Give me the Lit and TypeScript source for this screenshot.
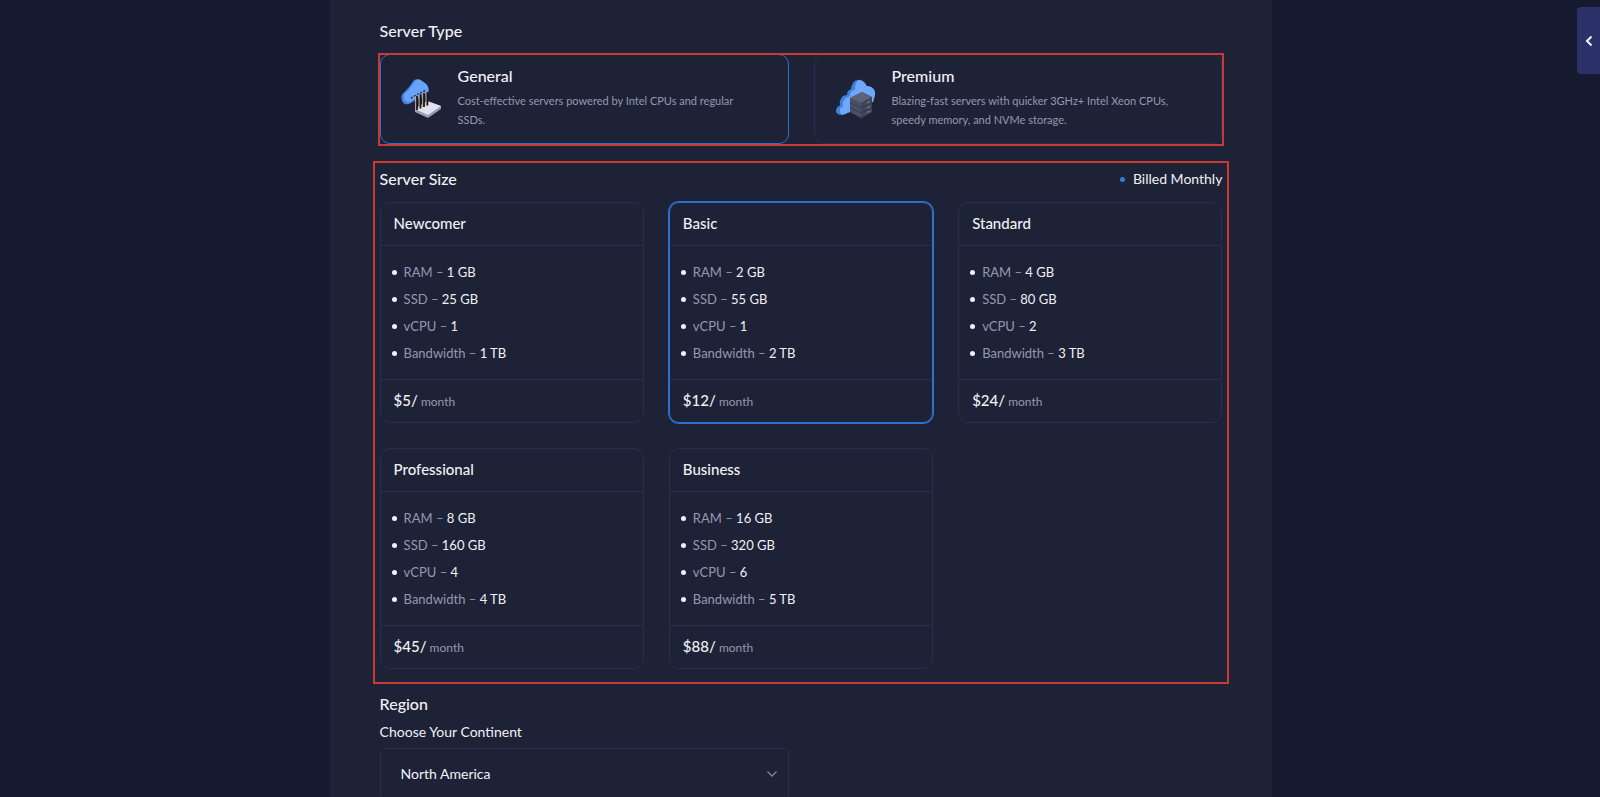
import { LitElement, html, css, svg } from "lit";
import { customElement, state } from "lit/decorators.js";
import { classMap } from "lit/directives/class-map.js";

interface ServerType {
  id: string;
  name: string;
  text: string;
}

interface Plan {
  name: string;
  ram: string;
  ssd: string;
  cpu: string;
  bandwidth: string;
  price: string;
}

const TYPES: ServerType[] = [
  { id: "general", name: "General", text: "Cost-effective servers powered by Intel CPUs and regular SSDs." },
  { id: "premium", name: "Premium", text: "Blazing-fast servers with quicker 3GHz+ Intel Xeon CPUs, speedy memory, and NVMe storage." },
];

const PLANS: Plan[] = [
  { name: "Newcomer", ram: "1 GB", ssd: "25 GB", cpu: "1", bandwidth: "1 TB", price: "$5" },
  { name: "Basic", ram: "2 GB", ssd: "55 GB", cpu: "1", bandwidth: "2 TB", price: "$12" },
  { name: "Standard", ram: "4 GB", ssd: "80 GB", cpu: "2", bandwidth: "3 TB", price: "$24" },
  { name: "Professional", ram: "8 GB", ssd: "160 GB", cpu: "4", bandwidth: "4 TB", price: "$45" },
  { name: "Business", ram: "16 GB", ssd: "320 GB", cpu: "6", bandwidth: "5 TB", price: "$88" },
];

const generalIcon = svg`
  <path d="M15 34 27 26 41 31V34L28 43 15 37Z" fill="#9b9db2"/>
  <path d="M15 34 27 26 41 31 28 40Z" fill="#e2e3ef"/>
  <path d="M1.500 23C1 20 3 18 4.500 17L9 12L12 8C13 5 16 3.500 19 4.500C21 5 22 6 24 7.500C27 9 28.500 12 28.500 15V18L9 29C4 30.500 2 27 1.500 23Z" fill="#4384e8"/>
  <path d="M4 21.500C4 18.500 6 17 8 16L11 12L14 8C15 5 17 4 19 4.500C21 5 22 6 24 7.500C27 9 28.500 12 28.500 15V16L10 27C6 28 4 25 4 21.500Z" fill="#68a3f7"/>
  <path d="M11 23 26 15" stroke="#26334f" stroke-width="1.500" stroke-dasharray="2 1.500"/>
  <path d="M16.800 21V35M20.300 19V33.500M23.800 18V32M27.200 17V30.500" stroke="#1a1a22" stroke-width="2.200"/>
  <path d="M15.600 21V35M19.100 19V33.500M22.600 18V32M26 17V30.500" stroke="#c9ab98" stroke-width="1"/>`;

const premiumIcon = svg`
  <path d="M2 36C2 33 4 31 6 30.500C5 25 8 20 13 20C13 17 14 15 17 14C18 8 21 4 26 5C30 6 32 9 32.500 11C38 11 42 15 41 20L39 27 9 40C5 40 2 39 2 36Z" fill="#3e7fe0"/>
  <path d="M6 36C6 33 7 32 9 31.500C8 26 11 22 16 21.500C16 17 18 15 21 15C21 9 23 5 26 5C30 6 32 9 32.500 11C38 11 42 15 41 20L39 27 11 39C8 40 6 39 6 36Z" fill="#6fa8fa"/>
  <path d="M16 23 28 17 38 22V37L27 43 16 37Z" fill="#4a5166"/>
  <path d="M16 23 28 17 38 22 27 28Z" fill="#5c6377"/>
  <path d="M27 28V43L38 37V22Z" fill="#3f465b"/>
  <path d="M16 28 27 33 38 27.500M16 32.500 27 38 38 32.500" fill="none" stroke="#2f364b" stroke-width="0.800"/>
  <path d="M33 28 36 26.500M33 33 36 31.500M33 37.500 36 36" stroke="#8f9284" stroke-width="0.900"/>`;

@customElement("app-root")
export class AppRoot extends LitElement {
  @state() private type = "general";
  @state() private plan = "Basic";

  static styles = css`
    :host {
      --line: #292d4e;
      --blue: #2f6fce;
      --text: #f0f1f7;
      --muted: #9498b3;
      display: block;
      position: relative;
      height: 100vh;
      overflow: hidden;
      background: #151a30;
      color: var(--text);
      font: 400 14px/20px Lato, "Open Sans", sans-serif;
    }
    * { box-sizing: border-box; }
    h2, h3, p, ul { margin: 0; padding: 0; font-weight: 400; }
    .page {
      height: 100%;
      padding-left: 2px;
      overflow-y: auto;
      scrollbar-width: none;
    }
    .panel {
      width: 59%;
      min-width: 800px;
      min-height: 100%;
      margin: 0 auto;
      padding: 19px 50px 0;
      background: #1e2236;
      display: flex;
      flex-direction: column;
      gap: 23px;
    }
    .head {
      display: flex;
      align-items: center;
      justify-content: space-between;
      margin-bottom: 11px;
    }
    .title { font-size: 16px; line-height: 24px; font-weight: 500; }
    .billed { display: flex; align-items: center; gap: 8px; }
    .billed::before {
      content: "";
      width: 5px;
      height: 5px;
      border-radius: 50%;
      background: #2f7fe0;
    }
    .marked { position: relative; }
    .marked::after {
      content: "";
      position: absolute;
      inset: -1px -2px -2px;
      border: 2px solid #c93a30;
      pointer-events: none;
    }
    .marked.wide::after { inset: -6px -7px -15px; }
    .grid { display: grid; gap: 25px; }
    .two { grid-template-columns: repeat(2, 1fr); }
    .three { grid-template-columns: repeat(3, 1fr); }
    .card {
      position: relative;
      display: block;
      border: 1px solid var(--line);
      border-radius: 10px;
      cursor: pointer;
    }
    .card.on { border-color: var(--blue); }
    .plan.on { box-shadow: 0 0 0 1px var(--blue); }
    .pick {
      position: absolute;
      inset: 0;
      width: 100%;
      height: 100%;
      margin: 0;
      opacity: 0;
      cursor: pointer;
    }
    .type {
      display: flex;
      align-items: center;
      gap: 14px;
      padding: 9px 30px 14px 19px;
    }
    .icon { flex: none; width: 44px; height: 44px; }
    .type-name { font-size: 16px; line-height: 24px; font-weight: 500; margin-bottom: 3px; }
    .type-text { font-size: 11px; line-height: 19px; color: var(--muted); }
    .plan-name {
      padding: 0 13px 2px;
      font-size: 15px;
      line-height: 40px;
      font-weight: 500;
      border-bottom: 1px solid var(--line);
    }
    .specs {
      list-style: none;
      padding: 13px 11px 12px;
      font-size: 13px;
      line-height: 27px;
    }
    .spec { display: flex; align-items: center; gap: 7px; }
    .spec::before {
      content: "";
      width: 5px;
      height: 5px;
      border-radius: 50%;
      background: var(--text);
    }
    .key { color: var(--muted); }
    .price {
      padding: 0 13px;
      font-size: 15px;
      line-height: 41px;
      font-weight: 500;
      border-top: 1px solid var(--line);
    }
    .per { font-size: 12px; font-weight: 400; color: var(--muted); }
    .field { width: calc(50% - 12px); }
    .label { display: block; margin: 6px 0; }
    .select-box { display: grid; align-items: center; }
    .select {
      grid-area: 1 / 1;
      width: 100%;
      height: 52px;
      padding: 0 20px;
      appearance: none;
      border: 1px solid var(--line);
      border-radius: 4px;
      background: transparent;
      color: var(--text);
      font: inherit;
    }
    .select option { background: #1e2236; }
    .chevron {
      grid-area: 1 / 1;
      justify-self: end;
      width: 12px;
      height: 8px;
      margin-right: 11px;
      pointer-events: none;
    }
    .drawer {
      position: absolute;
      top: 7px;
      right: 0;
      width: 23px;
      height: 67px;
      padding: 0;
      border: 0;
      border-radius: 4px 0 0 4px;
      background: #2d3169;
      display: grid;
      place-items: center;
      cursor: pointer;
    }
  `;

  private renderType(t: ServerType) {
    return html`<label class=${classMap({ card: true, type: true, on: this.type === t.id })}>
      <input class="pick" type="radio" name="type" .checked=${this.type === t.id} @change=${() => (this.type = t.id)} />
      <svg class="icon" viewBox="0 0 44 44" fill="none" aria-hidden="true">${t.id === "general" ? generalIcon : premiumIcon}</svg>
      <div>
        <h3 class="type-name">${t.name}</h3>
        <p class="type-text">${t.text}</p>
      </div>
    </label>`;
  }

  private renderPlan(p: Plan) {
    const specs = [["RAM", p.ram], ["SSD", p.ssd], ["vCPU", p.cpu], ["Bandwidth", p.bandwidth]];
    return html`<label class=${classMap({ card: true, plan: true, on: this.plan === p.name })}>
      <input class="pick" type="radio" name="plan" .checked=${this.plan === p.name} @change=${() => (this.plan = p.name)} />
      <h3 class="plan-name">${p.name}</h3>
      <ul class="specs">
        ${specs.map(([k, v]) => html`<li class="spec"><span><span class="key">${k} –</span> ${v}</span></li>`)}
      </ul>
      <p class="price">${p.price}/<span class="per"> month</span></p>
    </label>`;
  }

  render() {
    return html`
      <main class="page">
        <div class="panel">
          <section>
            <div class="head"><h2 class="title">Server Type</h2></div>
            <div class="grid two marked">${TYPES.map((t) => this.renderType(t))}</div>
          </section>
          <section class="marked wide">
            <div class="head">
              <h2 class="title">Server Size</h2>
              <span class="billed">Billed Monthly</span>
            </div>
            <div class="grid three">${PLANS.map((p) => this.renderPlan(p))}</div>
          </section>
          <section>
            <h2 class="title">Region</h2>
            <div class="field">
              <label class="label" for="continent">Choose Your Continent</label>
              <div class="select-box">
                <select class="select" id="continent">
                  <option>North America</option>
                </select>
                <svg class="chevron" viewBox="0 0 12 8" fill="none" aria-hidden="true">
                  <path d="M1.500 1.500 6 6 10.500 1.500" stroke="#8084a0" stroke-width="1.300" />
                </svg>
              </div>
            </div>
          </section>
        </div>
      </main>
      <button class="drawer" aria-label="Open side panel">
        <svg width="8" height="12" viewBox="0 0 8 12" fill="none"><path d="M6.500 1.500 2 6 6.500 10.500" stroke="#f3f3fa" stroke-width="2" /></svg>
      </button>
    `;
  }
}
